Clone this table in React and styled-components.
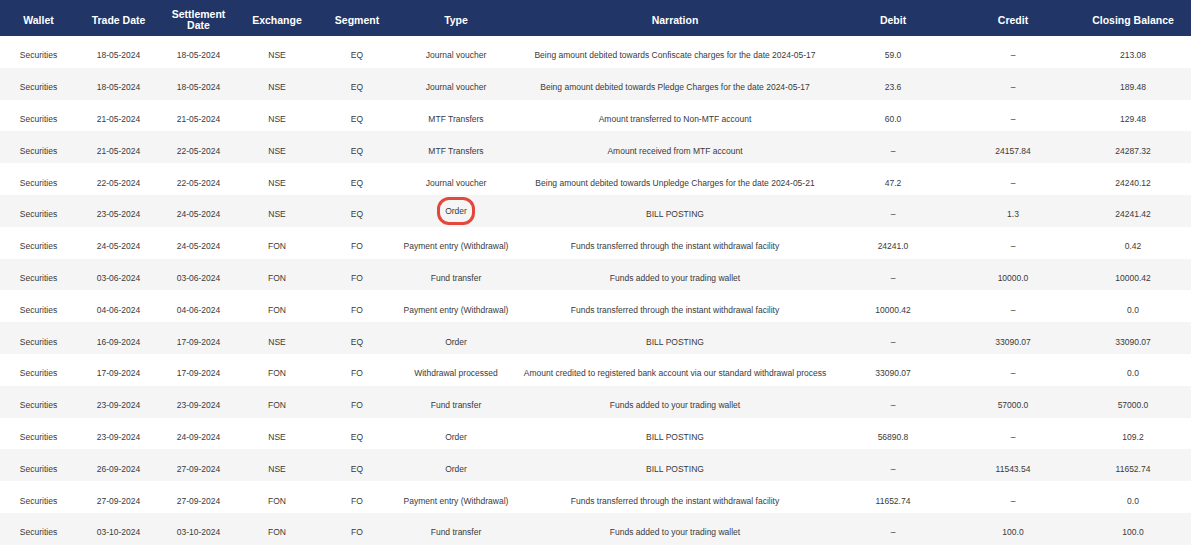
import React from 'react';
import styled, { createGlobalStyle } from 'styled-components';

const GlobalStyle = createGlobalStyle`
  body {
    margin: 0;
    background: #ffffff;
    font-family: "Liberation Sans", Arial, sans-serif;
  }
`;

const Table = styled.table`
  width: 1191px;
  border-collapse: collapse;
  table-layout: fixed;
  font-family: "Liberation Sans", Arial, sans-serif;
`;

const HeadRow = styled.tr`
  height: 36px;
`;

const HeadCell = styled.th`
  background: #213567;
  color: #ffffff;
  font-size: 10.5px;
  font-weight: bold;
  line-height: 11px;
  padding: 4px 4px 0;
  text-align: center;
  vertical-align: middle;
`;

const Row = styled.tr`
  height: 31.8px;
  background: ${(p) => (p.$striped ? '#f5f5f5' : '#ffffff')};
`;

const Cell = styled.td`
  color: #3a3a3a;
  font-size: 8.5px;
  text-align: center;
  vertical-align: middle;
  padding: 7px 2px 0;
  white-space: nowrap;
`;

const Marked = styled.span`
  display: inline-block;
  padding: 6px 5px;
  margin: -9px 0 -3px;
  border: 3px solid #e2483b;
  border-radius: 12px;
  line-height: 10px;
`;

const columns = [
  { label: 'Wallet', width: 77 },
  { label: 'Trade Date', width: 83 },
  { label: 'Settlement Date', width: 77 },
  { label: 'Exchange', width: 80 },
  { label: 'Segment', width: 80 },
  { label: 'Type', width: 118 },
  { label: 'Narration', width: 320 },
  { label: 'Debit', width: 116 },
  { label: 'Credit', width: 124 },
  { label: 'Closing Balance', width: 116 },
];

const rows = [
  ['18-05-2024', '18-05-2024', 'NSE', 'EQ', 'Journal voucher', 'Being amount debited towards Confiscate charges for the date 2024-05-17', '59.0', '–', '213.08'],
  ['18-05-2024', '18-05-2024', 'NSE', 'EQ', 'Journal voucher', 'Being amount debited towards Pledge Charges for the date 2024-05-17', '23.6', '–', '189.48'],
  ['21-05-2024', '21-05-2024', 'NSE', 'EQ', 'MTF Transfers', 'Amount transferred to Non-MTF account', '60.0', '–', '129.48'],
  ['21-05-2024', '22-05-2024', 'NSE', 'EQ', 'MTF Transfers', 'Amount received from MTF account', '–', '24157.84', '24287.32'],
  ['22-05-2024', '22-05-2024', 'NSE', 'EQ', 'Journal voucher', 'Being amount debited towards Unpledge Charges for the date 2024-05-21', '47.2', '–', '24240.12'],
  ['23-05-2024', '24-05-2024', 'NSE', 'EQ', 'Order', 'BILL POSTING', '–', '1.3', '24241.42', true],
  ['24-05-2024', '24-05-2024', 'FON', 'FO', 'Payment entry (Withdrawal)', 'Funds transferred through the instant withdrawal facility', '24241.0', '–', '0.42'],
  ['03-06-2024', '03-06-2024', 'FON', 'FO', 'Fund transfer', 'Funds added to your trading wallet', '–', '10000.0', '10000.42'],
  ['04-06-2024', '04-06-2024', 'FON', 'FO', 'Payment entry (Withdrawal)', 'Funds transferred through the instant withdrawal facility', '10000.42', '–', '0.0'],
  ['16-09-2024', '17-09-2024', 'NSE', 'EQ', 'Order', 'BILL POSTING', '–', '33090.07', '33090.07'],
  ['17-09-2024', '17-09-2024', 'FON', 'FO', 'Withdrawal processed', 'Amount credited to registered bank account via our standard withdrawal process', '33090.07', '–', '0.0'],
  ['23-09-2024', '23-09-2024', 'FON', 'FO', 'Fund transfer', 'Funds added to your trading wallet', '–', '57000.0', '57000.0'],
  ['23-09-2024', '24-09-2024', 'NSE', 'EQ', 'Order', 'BILL POSTING', '56890.8', '–', '109.2'],
  ['26-09-2024', '27-09-2024', 'NSE', 'EQ', 'Order', 'BILL POSTING', '–', '11543.54', '11652.74'],
  ['27-09-2024', '27-09-2024', 'FON', 'FO', 'Payment entry (Withdrawal)', 'Funds transferred through the instant withdrawal facility', '11652.74', '–', '0.0'],
  ['03-10-2024', '03-10-2024', 'FON', 'FO', 'Fund transfer', 'Funds added to your trading wallet', '–', '100.0', '100.0'],
];

const App = () => {
  return (
    <>
      <GlobalStyle />
      <Table>
        <colgroup>
          {columns.map((c) => (
            <col key={c.label} style={{ width: c.width }} />
          ))}
        </colgroup>
        <thead>
          <HeadRow>
            {columns.map((c) => (
              <HeadCell key={c.label}>{c.label}</HeadCell>
            ))}
          </HeadRow>
        </thead>
        <tbody>
          {rows.map((r, i) => (
            <Row key={i} $striped={i % 2 === 1}>
              <Cell>Securities</Cell>
              <Cell>{r[0]}</Cell>
              <Cell>{r[1]}</Cell>
              <Cell>{r[2]}</Cell>
              <Cell>{r[3]}</Cell>
              <Cell>{r[9] ? <Marked>{r[4]}</Marked> : r[4]}</Cell>
              <Cell>{r[5]}</Cell>
              <Cell>{r[6]}</Cell>
              <Cell>{r[7]}</Cell>
              <Cell>{r[8]}</Cell>
            </Row>
          ))}
        </tbody>
      </Table>
    </>
  );
};

export default App;
